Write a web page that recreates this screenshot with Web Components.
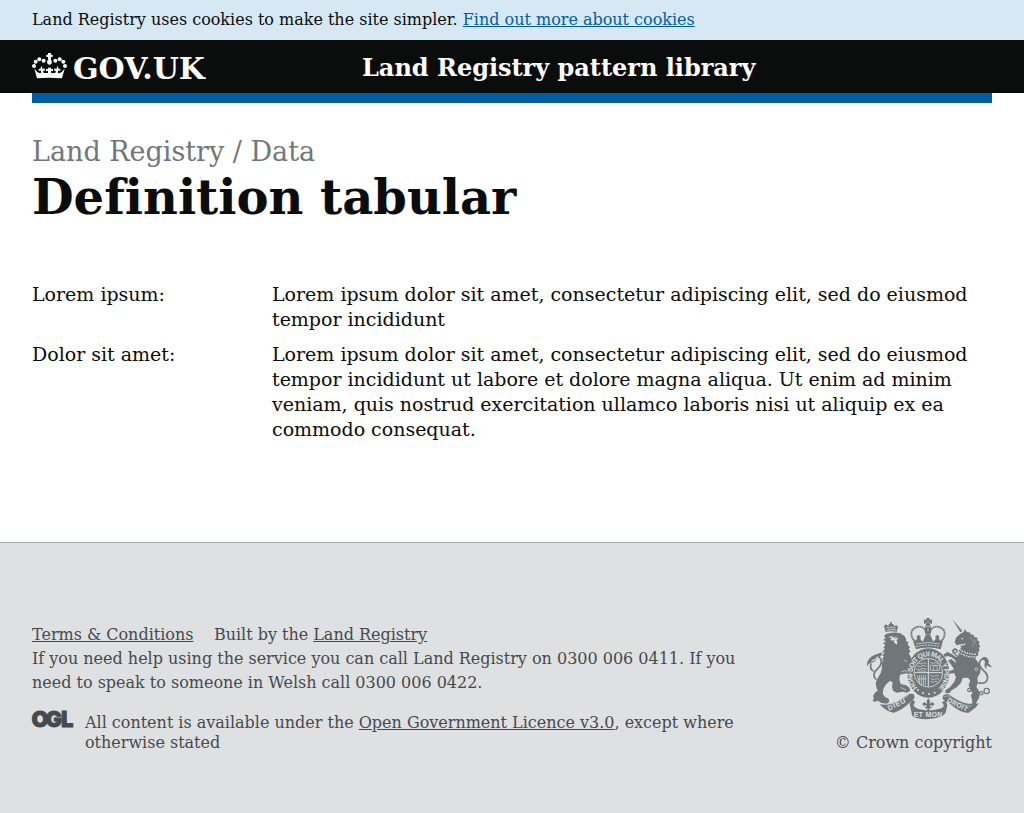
<!DOCTYPE html>
<html lang="en">
<head>
<meta charset="utf-8">
<title>Definition tabular - Land Registry pattern library</title>
<style>
html,body{margin:0;background:#dee0e2}
body{font-family:"DejaVu Serif",serif;color:#0b0c0c;font-size:16px;font-variant-ligatures:none;letter-spacing:-.01px}
</style>
</head>
<body>
<pattern-page></pattern-page>
<script>
function define(name, html) {
  const template = document.createElement('template');
  template.innerHTML = html;
  customElements.define(name, class extends HTMLElement {
    constructor() {
      super();
      this.attachShadow({mode: 'open'}).append(template.content.cloneNode(true));
    }
  });
}

define('cookie-banner', `<style>
:host{display:block;background:#d5e8f3;padding:10px 32px;line-height:20px}
a{color:#005ea5}
</style>Land Registry uses cookies to make the site simpler. <a href="#">Find out more about cookies</a>`);

define('crown-icon', `<style>:host{display:block;width:35px;height:30px}svg{display:block}</style>
<svg width="35" height="30" viewBox="96 156 105 90" fill="#fff">
<path d="M144 159h9v5h5v7h-5v8h-9v-8h-5v-7h5z"/>
<ellipse cx="148.500" cy="186" rx="7" ry="8"/>
<g><circle cx="131" cy="182" r="6"/><circle cx="166" cy="182" r="6"/>
<circle cx="118" cy="178" r="6"/><circle cx="179" cy="178" r="6"/>
<circle cx="107" cy="185" r="6"/><circle cx="190" cy="185" r="6"/>
<circle cx="102" cy="198" r="6"/><circle cx="195" cy="198" r="6"/></g>
<path d="M103 206L112 216L119 220L124 218L122 211L116 213V206L121 207L124 197L128 207L134 205V213L129 212L131 219L144 219V212L138 214V206L144 208V203H153V208L159 206V214L153 212V219L166 219L168 212L163 213V205L169 207L173 197L176 207L181 206V213L175 211L173 218L178 220L185 216L194 206L186 235Q148 231 111 235z"/>
</svg>`);

define('site-header', `<style>
:host{display:block;background:#0b0c0c;color:#fff;height:53px;padding:0 32px}
.row{display:grid;grid-template-columns:330px 1fr;height:53px;align-items:center}
.logo{display:flex;gap:6px;align-items:center;font-weight:bold;font-size:30px;line-height:30px}
crown-icon{margin-top:1px}
.name{padding-top:4px}
.title{font-size:24px;line-height:30px;font-weight:bold;padding-top:3px}
</style><div class="row"><div class="logo"><crown-icon></crown-icon><span class="name">GOV.UK</span></div><div class="title">Land Registry pattern library</div></div>`);

define('page-heading', `<style>
:host{display:block;padding-top:31px}
.caption{font-size:27px;line-height:36px;color:#6f777b}
h1{margin:-1px 0 0;font-size:48px;line-height:56px;font-weight:bold}
</style><div class="caption"><slot name="caption"></slot></div><h1><slot></slot></h1>`);

define('definition-row', `<style>
:host{display:grid;grid-template-columns:240px 1fr;font-size:19px;line-height:25px}
</style><div><slot name="term"></slot></div><div><slot></slot></div>`);

define('ogl-logo', `<style>:host{display:block;width:41px;height:17px}svg{display:block;margin:-7px 0 -5px -2px}</style>
<svg width="46" height="29" viewBox="-2 -6 46 29"><text x="-.6 13.600 29" y="15.900" font-family="Inter" font-weight="900" font-size="22" fill="#454a4c" stroke="#454a4c" stroke-width=".8">OGL</text></svg>`);

define('royal-arms', `<style>:host{display:block;width:125px;height:103px;margin:-1px 0 1px}svg{display:block}
text{font-family:"Liberation Sans",sans-serif;font-weight:bold;fill:#dee0e2}
.l{fill:none;stroke:#dee0e2}.s{fill:none;stroke:#6f777b}</style>
<svg width="125" height="103" viewBox="21 21 375 309" fill="#6f777b">
<defs><path id="motto" d="M173 233A48 54 0 1 1 239 231"/></defs>
<!-- lion: crown, mane, body and tail -->
<path d="M77 66L72 49L77 43L85 48L87 42L91 41L89 37H96L95 41L100 43L103 49L109 45L114 50L110 66Q94 61 77 66z"/>
<path class="l" stroke-width="2.500" d="M79 54l5-3 4 4 5-5 4 5 6-4 4 3M80 61q13-4 29-1"/>
<path d="M78 72Q100 64 121 70L134 79L139 88L137 92L145 97L143 103L150 113L146 116L152 125L146 129L151 139L157 150L153 161L150 180L146 188L130 192L120 194L118 208L122 222L138 226L149 233L150 242L142 248L128 245L110 248L99 242L96 230L98 217L90 212L77 224L70 237L68 252L75 261L86 266L88 276L80 281L65 279L53 272L43 276L38 271L42 264L39 259L44 249L53 242L49 231L47 218L53 205L62 190L66 175L65 160L70 150L66 148L72 138L66 137L74 127L67 126L75 116L70 113L76 105L69 100L78 95L70 89L77 85L72 79z"/>
<path d="M86 81l10-3 4 5 9-3 6 6-6 4 3 5-1 9-7-5-5-6-6-2-2-5z" fill="#dee0e2"/>
<path d="M88 82l8 2-5 4zM104 84l8-2-4 5zM97 90l7 2-4 4z"/>
<path class="l" stroke-width="2" d="M124 186l9-4 12 3M132 150l9 5M122 232l16 8"/>
<path d="M20 168Q22 142 45 134L68 127L62 139L55 142Q49 153 40 157Q29 155 22 168z"/>
<path class="l" stroke-width="3.500" d="M35 152q13-1 19-13"/>
<path class="s" stroke-width="5" d="M55 139q15 12 5 29l-15 17q-8 14 4 24M33 160q-5 18 8 24"/>
<!-- unicorn: horn, head, mane, body and tail -->
<path d="M277 27L307 63L301 67z"/>
<path d="M284 97L288 83L299 73L311 66L314 58L321 66L332 68L330 73L342 75L341 80L353 84L351 90L359 96L356 101L361 110L356 113L359 122L354 126L355 136L349 139L346 147L357 160L362 177L360 190L352 203L354 218L349 230L359 247L358 262L350 276L343 292L333 290L337 277L335 262L338 249L330 238L326 224L331 212L324 203L308 204L303 218L291 231L275 241L268 250L255 248L257 240L270 232L283 215L288 202L282 189L268 191L261 185L276 181L282 178L272 162L264 152L274 147L288 159L286 151L275 142L264 138L254 141L250 134L262 126L275 132L286 140L295 140L296 124L303 112L301 103L290 106z"/>
<path d="M303 85l7-1-3 5zM299 102l12 1 7-5-4 7-9 2z" fill="#dee0e2"/>
<path class="l" stroke-width="4" stroke-dasharray="5 3" d="M299 117q16 16 51 16M296 126q18 15 51 15"/>
<path class="l" stroke-width="1" d="M331 80l10 16-3 15M342 88l6 15"/>
<path class="s" stroke-width="3.500" d="M293 122q-7-9-13-3t4 14l13 9"/>
<path class="s" stroke-width="5" d="M355 218q20 6 26-8t-10-28-12-26q5-12 18-12"/>
<path d="M367 143q10-5 16 3 5 7 2 14l12 12q-12-1-17-7l-1 13q-9-10-4-20 1-8-10-9z"/>
<g class="s" stroke-width="3.500"><circle cx="286" cy="124" r="5"/><circle cx="328" cy="240" r="5"/><circle cx="341" cy="257" r="6"/><circle cx="364" cy="250" r="5"/><circle cx="380" cy="243" r="8"/></g>
<circle class="l" cx="349" cy="178" r="4" stroke-width="2"/>
<!-- royal crown -->
<path d="M199 24h10v7l7-3v14l-7-3 3 12 3 12-5 12 6 11 2 10h-28l2-10 6-11-5-12 3-12 3-12-7 3V28l7 3z"/>
<path class="l" stroke-width="1.800" d="M200 36h8M198 49h12M204 54v11M198 75h12"/>
<path class="s" stroke-width="5.500" stroke-dasharray="5.500 1.300" d="M195 58q-13-13-29-5-20 11-7 34l8 13M213 58q13-13 29-5 20 11 7 34l-8 13"/>
<path d="M161 99l1-12 6 5 4-8-3-3 7-7 7 7-3 4 6 9h5l2-9 5-3-2-8h16l-2 8 5 3 2 9h5l6-9-3-4 7-7 7 7-3 3 4 8 6-5 1 12-5 19q-37-11-74 0z"/>
<path class="l" stroke-width="2.500" stroke-dasharray="6 3" d="M168 110q36-9 72 0"/>
<path class="l" stroke-width="2" d="M168 102q36-9 72 0"/>
<!-- garter and quartered shield -->
<ellipse cx="205" cy="189" rx="63" ry="74"/>
<circle class="l" cx="205" cy="188" r="43" stroke-width="2.500"/>
<text font-size="21"><textPath href="#motto" textLength="252">HONI·SOIT QUI MAL Y PENSE</textPath></text>
<path class="l" stroke-width="3" d="M205 147v82M164 188h82"/>
<path class="l" stroke-width="2" d="M175 159l8 3 7-4 9 3M172 167l9 3 8-4 10 3M169 176l9 3 8-4 13 3M173 183h25M211 157l9 4 7-4 7 4M211 166h28v15h-28zM220 181v-9l5-6 7 7v8M171 196l7 22M178 195v26M184 195v30M190 195v30M196 195v30M174 207h25M211 196l10 4 8-4 9 3M211 205l10 4 8-4 8 3M211 214l9 3 8-4 5 3"/>
<g fill="#dee0e2"><circle cx="174" cy="240" r="3"/><circle cx="189" cy="249" r="3"/><circle cx="207" cy="252" r="3"/><circle cx="224" cy="248" r="3"/></g>
<!-- motto scroll and fleur-de-lis -->
<path d="M59 283q30 4 59-12l31-20 12 1 3 11-7 8-12 11q-22 20-43 26-20 0-43-25z"/>
<path class="l" stroke-width="1.500" d="M70 284q36-1 61-19l15-9"/>
<path d="M149 281l8-11q9 1 7 9l-4 7q7 12 27 13 27 6 57-4 10-5 6-13l-5-6 12-4 5 13-5 23-10 11q-40 15-80 4-13-5-12-15z"/>
<path d="M251 255l11-4 29 18q29 17 65 11l-8 12-23 17q-28-4-48-22-9-9-22-14-12-7-4-18z"/>
<path class="l" stroke-width="1.500" d="M253 260l11-3 23 17q25 13 48 15"/>
<path d="M202 305v-10h-7v-4h5l-3-7-5 5-5-7 6-6 8 6-1-10 5-7 5 7-1 10 8-6 6 6-5 7-5-5-3 7h5v4h-7v10z"/>
<text x="87" y="302" font-size="21" transform="rotate(-26 87 302)" textLength="57">DIEU</text>
<text x="161" y="322" font-size="21" textLength="86">ET MON</text>
<text x="260" y="275" font-size="20" transform="rotate(27 260 275)" textLength="66">DROIT</text>
</svg>`);

define('site-footer', `<style>
:host{display:flex;justify-content:space-between;box-sizing:border-box;height:271px;border-top:1px solid #a1acb2;background:#dee0e2;padding:75px 32px 0;color:#454a4c}
a{color:inherit}
.info{width:720px;padding-top:5px;line-height:24px}
.first{display:flex;gap:20.500px}
.licence{display:grid;grid-template-columns:41px 1fr;gap:12px;line-height:20px;padding-top:18px}
ogl-logo{margin-top:-1px}
.crest{display:flex;flex-direction:column;align-items:flex-end;line-height:20px;gap:12px}
</style><div class="info"><div class="first"><a href="#">Terms &amp; Conditions</a><span>Built by the <a href="#">Land Registry</a></span></div>
<div>If you need help using the service you can call Land Registry on 0300 006 0411. If you need to speak to someone in Welsh call 0300 006 0422.</div>
<div class="licence"><ogl-logo></ogl-logo><div>All content is available under the <a href="#">Open Government Licence v3.0</a>, except where <span>otherwise stated</span></div></div></div>
<div class="crest"><royal-arms></royal-arms><div>© Crown copyright</div></div>`);

define('pattern-page', `<style>
:host{display:block;background:#fff}
.bar{height:10px;margin:0 32px;background:#005ea5}
main{margin:0 32px;box-sizing:border-box;height:439px}
.list{display:grid;gap:10px;padding-top:57px}
</style><cookie-banner></cookie-banner><site-header></site-header><div class="bar"></div>
<main><page-heading><span slot="caption">Land Registry / Data</span>Definition tabular</page-heading>
<div class="list"><definition-row><span slot="term">Lorem ipsum:</span>Lorem ipsum dolor sit amet, consectetur adipiscing elit, sed do eiusmod tempor incididunt</definition-row>
<definition-row><span slot="term">Dolor sit amet:</span>Lorem ipsum dolor sit amet, consectetur adipiscing elit, sed do eiusmod tempor incididunt ut labore et dolore magna aliqua. Ut enim ad minim veniam, quis nostrud exercitation ullamco laboris nisi ut aliquip ex ea commodo consequat.</definition-row></div></main>
<site-footer></site-footer>`);
</script>
</body>
</html>
